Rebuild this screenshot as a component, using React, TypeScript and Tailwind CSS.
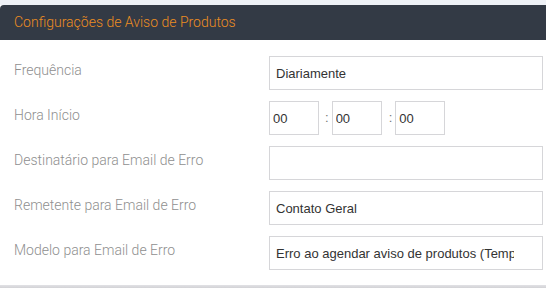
import { useState } from "react"

const labelCls = "mt-[4px] leading-5 text-[14px] font-light text-[#8f8f8f] font-['Roboto',sans-serif]"
const inputCls =
    "h-[34px] w-full border border-[#d6d6d9] bg-white px-[6px] text-[13px] text-[#333] font-['Liberation_Sans',Arial,sans-serif] outline-none"
const timeCls =
    "h-[34px] w-[50px] border border-[#d6d6d9] bg-white pl-[3px] text-[13px] text-[#333] font-['Liberation_Sans',Arial,sans-serif] outline-none"

export default function App() {
    const [form, setForm] = useState({
        frequencia: "Diariamente",
        hora: "00",
        minuto: "00",
        segundo: "00",
        destinatario: "",
        remetente: "Contato Geral",
        modelo: "Erro ao agendar aviso de produtos (Template padrão)",
    })

    return (
        <div className="min-h-[288px] w-[546px] bg-[#eef1f6] pt-[5px]">
            <div className="bg-white">
                <div className="flex h-[35px] items-center rounded-tl-[4px] bg-[#333a45] pl-[14px]">
                    <span className="text-[14px] font-light text-[#ec8d22] font-['Roboto',sans-serif]">
                        Configurações de Aviso de Produtos
                    </span>
                </div>

                <div className="grid grid-cols-[255px_1fr] gap-y-[11px] pl-[14px] pr-[3px] pt-[16px] pb-[15px]">
                    <label className={labelCls}>Frequência</label>
                    <input
                        className={inputCls}
                        value={form.frequencia}
                        onChange={(e) => setForm({ ...form, frequencia: e.target.value })}
                    />

                    <label className={labelCls}>Hora Início</label>
                    <div className="flex items-center">
                        <input
                            className={timeCls}
                            value={form.hora}
                            onChange={(e) => setForm({ ...form, hora: e.target.value })}
                        />
                        <span className="ml-[6px] mr-[3px] text-[13px] text-[#777] font-['Liberation_Sans',Arial,sans-serif]">:</span>
                        <input
                            className={timeCls}
                            value={form.minuto}
                            onChange={(e) => setForm({ ...form, minuto: e.target.value })}
                        />
                        <span className="ml-[7px] mr-[3px] text-[13px] text-[#777] font-['Liberation_Sans',Arial,sans-serif]">:</span>
                        <input
                            className={timeCls}
                            value={form.segundo}
                            onChange={(e) => setForm({ ...form, segundo: e.target.value })}
                        />
                    </div>

                    <label className={labelCls}>Destinatário para Email de Erro</label>
                    <input
                        className={inputCls}
                        value={form.destinatario}
                        onChange={(e) => setForm({ ...form, destinatario: e.target.value })}
                    />

                    <label className={labelCls}>Remetente para Email de Erro</label>
                    <input
                        className={inputCls}
                        value={form.remetente}
                        onChange={(e) => setForm({ ...form, remetente: e.target.value })}
                    />

                    <label className={labelCls}>Modelo para Email de Erro</label>
                    <input
                        className={`${inputCls} pr-[28px]`}
                        value={form.modelo}
                        onChange={(e) => setForm({ ...form, modelo: e.target.value })}
                    />
                </div>
            </div>
            <div className="h-[3px] bg-gradient-to-b from-[#e2e2e5] to-[#d2d2d6]" />
        </div>
    )
}
